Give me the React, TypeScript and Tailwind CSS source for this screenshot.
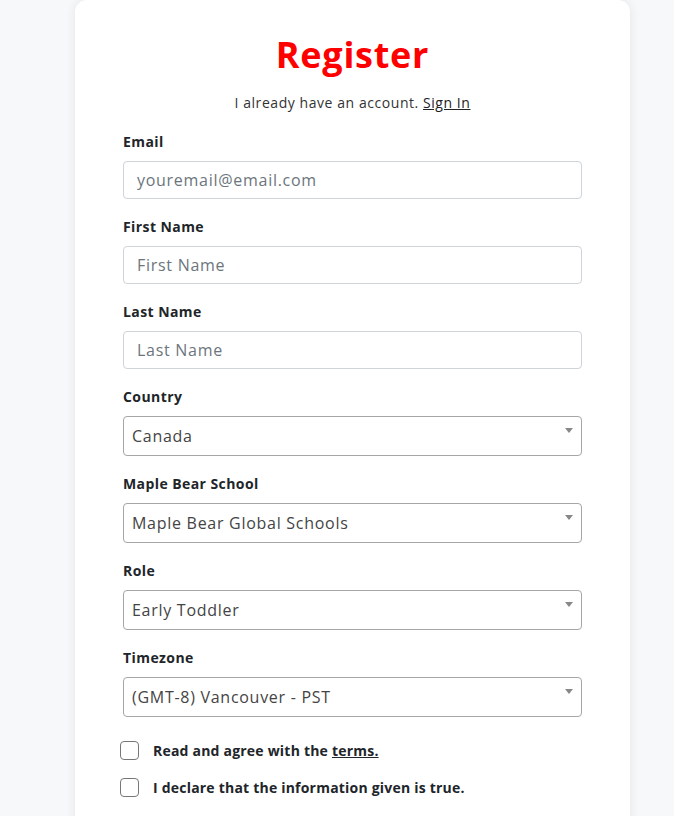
import { useState } from 'react';

const font = { fontFamily: '"Open Sans", "Liberation Sans", sans-serif' };

function TextField({ label, placeholder }: { label: string; placeholder: string }) {
  return (
    <div className="flex flex-col">
      <label className="mb-[9px] text-[14px] font-bold leading-[20px] tracking-[0.03em] text-[#212529]">{label}</label>
      <input
        placeholder={placeholder}
        className="h-[38px] w-full rounded-[4px] border border-[#ced4da] bg-white px-[13px] text-[16px] tracking-[0.045em] text-[#495057] outline-none placeholder:text-[#6c757d]"
      />
    </div>
  );
}

function SelectField({ label, value }: { label: string; value: string }) {
  return (
    <div className="flex flex-col">
      <label className="mb-[9px] text-[14px] font-bold leading-[20px] tracking-[0.03em] text-[#212529]">{label}</label>
      <div className="relative flex h-[40px] w-full items-center rounded-[4px] border border-[#a6a6a6] bg-white px-[8px] text-[16px] tracking-[0.045em] text-[#444]">
        {value}
        <span className="absolute right-[8px] top-[11px] h-0 w-0 border-x-[4px] border-t-[5px] border-x-transparent border-t-[#888]" />
      </div>
    </div>
  );
}

function Check({ children }: { children: React.ReactNode }) {
  const [on, setOn] = useState(false);
  return (
    <label className="flex items-center gap-[14px] text-[14px] font-bold tracking-[0.015em] text-[#212529]">
      <span
        onClick={() => setOn(!on)}
        className="h-[19px] w-[19px] rounded-[4px] border-[1.5px] border-[#777] bg-white"
      />
      <span>{children}</span>
    </label>
  );
}

export default function App() {
  return (
    <div className="min-h-[816px] bg-[#f7f8fa]" style={font}>
      <div className="ml-[75px] w-[555px] rounded-xl bg-white px-[48px] pt-[33px] pb-[40px] shadow-[0_0_12px_rgba(0,0,0,0.08)]">
        <h1 className="text-center text-[36px] font-bold leading-[44px] tracking-[0.02em] text-[#ff0000]">Register</h1>
        <p className="mt-[16px] text-center text-[14px] leading-[20px] tracking-[0.04em] text-[#333]">
          I already have an account. <a href="#" className="text-[#222] underline">Sign In</a>
        </p>
        <div className="mt-[19px] flex flex-col gap-[18px]">
          <TextField label="Email" placeholder="youremail@email.com" />
          <TextField label="First Name" placeholder="First Name" />
          <TextField label="Last Name" placeholder="Last Name" />
          <SelectField label="Country" value="Canada" />
          <SelectField label="Maple Bear School" value="Maple Bear Global Schools" />
          <SelectField label="Role" value="Early Toddler" />
          <SelectField label="Timezone" value="(GMT-8) Vancouver - PST" />
        </div>
        <div className="-ml-[3px] mt-[23px] flex flex-col gap-[16px]">
          <Check>
            Read and agree with the <a href="#" className="underline">terms.</a>
          </Check>
          <Check>I declare that the information given is true.</Check>
        </div>
      </div>
    </div>
  );
}
